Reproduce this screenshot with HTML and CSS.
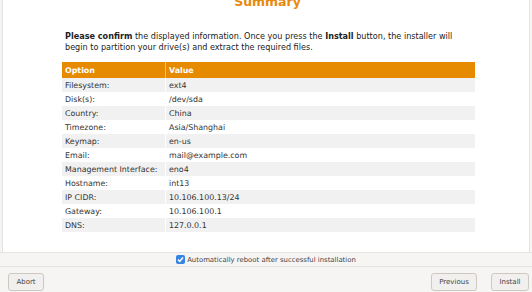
FILE: index.html
```html
<!DOCTYPE html>
<html lang="en">
<head>
  <meta charset="UTF-8">
  <title>Summary</title>
  <link rel="stylesheet" href="styles.css">
</head>
<body>
  <div class="window">
    <div class="content">
      <h1 class="title">Summary</h1>
      <p class="intro"><b>Please confirm</b> the displayed information. Once you press the <b>Install</b> button, the installer will begin to partition your drive(s) and extract the required files.</p>
      <table class="summary">
        <tr><th>Option</th><th>Value</th></tr>
        <tr><td>Filesystem:</td><td>ext4</td></tr>
        <tr><td>Disk(s):</td><td>/dev/sda</td></tr>
        <tr><td>Country:</td><td>China</td></tr>
        <tr><td>Timezone:</td><td>Asia/Shanghai</td></tr>
        <tr><td>Keymap:</td><td>en-us</td></tr>
        <tr><td>Email:</td><td>mail@example.com</td></tr>
        <tr><td>Management Interface:</td><td>eno4</td></tr>
        <tr><td>Hostname:</td><td>int13</td></tr>
        <tr><td>IP CIDR:</td><td>10.106.100.13/24</td></tr>
        <tr><td>Gateway:</td><td>10.106.100.1</td></tr>
        <tr><td>DNS:</td><td>127.0.0.1</td></tr>
      </table>
    </div>
    <div class="reboot">
      <label class="check">
        <span class="box"><svg width="9" height="9" viewBox="0 0 9 9"><path d="M2 4.6 L3.8 6.3 L7 2.6" fill="none" stroke="#fff" stroke-width="1.5"/></svg></span>
        Automatically reboot after successful installation
      </label>
    </div>
    <div class="buttons">
      <button class="btn">Abort</button>
      <span class="spacer"></span>
      <button class="btn btn-prev">Previous</button>
      <button class="btn btn-install">Install</button>
    </div>
  </div>
</body>
</html>
```

FILE: styles.css
```css
body {
  margin: 0;
  font-family: "DejaVu Sans", sans-serif;
  background: #f6f5f4;
}
.window {
  display: flex;
  flex-direction: column;
  height: 292px;
  width: 532px;
}
.content {
  flex: 1;
  background: #fff;
  margin: 0 2px;
  border-left: 1px solid #e4e3e1;
  border-right: 1px solid #e4e3e1;
  padding: 0 56px 0 59px;
}
.title {
  margin: -6px 0 0;
  text-align: center;
  color: #e8890c;
  font-size: 12.5px;
  line-height: 16px;
}
.intro {
  margin: 21px 0 9px 3px;
  font-size: 8.1px;
  line-height: 11px;
  color: #222;
}
.summary {
  width: 413px;
  border-collapse: collapse;
  font-size: 7.9px;
  color: #333;
}
.summary th {
  background: #e68a00;
  color: #fff;
  text-align: left;
  height: 16px;
  padding: 0 3px;
  font-weight: bold;
}
.summary th:first-child {
  width: 97px;
  border-right: 1px solid #f3c27a;
}
.summary td {
  height: 14px;
  padding: 0 3px;
  white-space: nowrap;
}
.summary td:first-child {
  border-right: 1px solid #fff;
}
.summary tr:nth-child(even) td {
  background: #f1f1f1;
}
.reboot {
  height: 13px;
  border-top: 1px solid #e4e3e1;
  border-bottom: 1px solid #e4e3e1;
  display: flex;
  justify-content: center;
  align-items: center;
  font-size: 6.9px;
  color: #444;
}
.check {
  display: flex;
  align-items: center;
  gap: 2px;
}
.box {
  width: 9px;
  height: 9px;
  border-radius: 2px;
  background: #3584e4;
  display: flex;
}
.buttons {
  height: 24px;
  display: flex;
  align-items: flex-end;
  padding: 0 3px 1px 8px;
  gap: 14px;
}
.spacer {
  flex: 1;
}
.btn {
  height: 18px;
  font-family: "DejaVu Sans", sans-serif;
  font-size: 7px;
  color: #444;
  background: #f1f0ef;
  border: 1px solid #cdc8c2;
  border-radius: 3px;
  padding: 0;
  width: 36px;
}
.btn-prev {
  width: 46px;
}
.btn-install {
  width: 38px;
}
```
